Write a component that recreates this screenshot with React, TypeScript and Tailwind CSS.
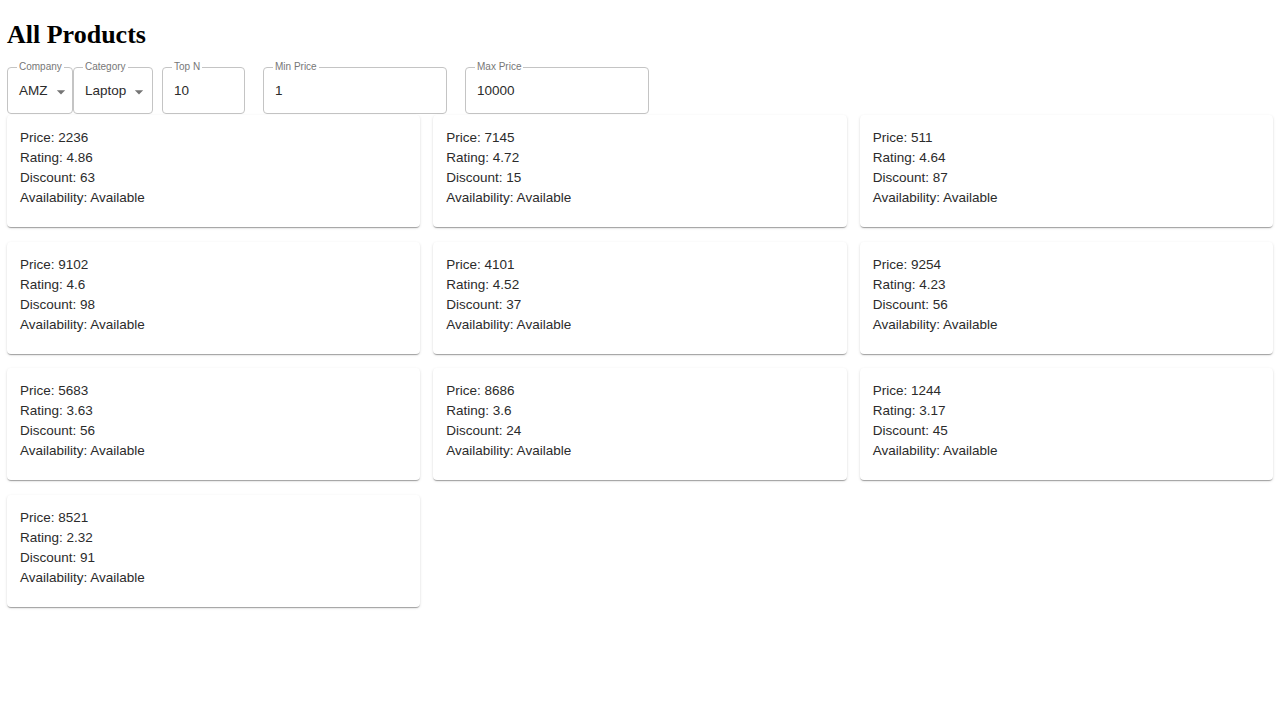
import React from "react";

type P = { price: number; rating: number; discount: number };
const products: P[] = [
  { price: 2236, rating: 4.86, discount: 63 },
  { price: 7145, rating: 4.72, discount: 15 },
  { price: 511, rating: 4.64, discount: 87 },
  { price: 9102, rating: 4.6, discount: 98 },
  { price: 4101, rating: 4.52, discount: 37 },
  { price: 9254, rating: 4.23, discount: 56 },
  { price: 5683, rating: 3.63, discount: 56 },
  { price: 8686, rating: 3.6, discount: 24 },
  { price: 1244, rating: 3.17, discount: 45 },
  { price: 8521, rating: 2.32, discount: 91 },
];

function Arrow() {
  return (
    <svg width="20" height="20" viewBox="0 0 24 24" className="shrink-0 text-[#757575]">
      <path d="M7 10l5 5 5-5z" fill="currentColor" />
    </svg>
  );
}

function Field({
  label,
  value,
  width,
  select,
}: {
  label: string;
  value: string;
  width: string;
  select?: boolean;
}) {
  return (
    <fieldset
      className={`${width} h-[52px] border border-[#c4c4c4] rounded-[4px] px-[10px] pb-0 m-0 min-w-0`}
    >
      <legend className="-ml-[1px] px-[2px] text-[10px] leading-[10px] text-[#777]">
        {label}
      </legend>
      <div className="flex items-center h-[39px] text-[13.5px] text-[#2b2b2b]">
        <span className="pl-[1px]">{value}</span>
        {select && (
          <span className="ml-[3px] mt-[1px]">
            <Arrow />
          </span>
        )}
      </div>
    </fieldset>
  );
}

export default function App() {
  return (
    <div
      className="bg-white min-h-[720px] px-[7px] pb-[8px]"
      style={{ fontFamily: '"Liberation Sans", Arial, sans-serif' }}
    >
      <h1
        className="text-[26px] font-bold leading-[30px] pt-[20px] pb-[12px] text-black"
        style={{ fontFamily: '"Liberation Serif", "Times New Roman", serif' }}
      >
        All Products
      </h1>
      <div className="flex items-start">
        <Field label="Company" value="AMZ" width="w-[66px]" select />
        <Field label="Category" value="Laptop" width="w-[80px]" select />
        <div className="w-[9px]" />
        <Field label="Top N" value="10" width="w-[83px]" />
        <div className="w-[18px]" />
        <Field label="Min Price" value="1" width="w-[184px]" />
        <div className="w-[18px]" />
        <Field label="Max Price" value="10000" width="w-[184px]" />
      </div>
      <div className="grid grid-cols-3 gap-x-[13px] gap-y-[14.7px] mt-[1px]">
        {products.map((p, i) => (
          <div
            key={i}
            className="bg-white rounded-[4px] px-[13px] pt-[13px] pb-[19px] text-[13.5px] leading-[20px] text-[#2b2b2b] shadow-[0_2px_1px_-1px_rgba(0,0,0,0.2),0_1px_1px_0_rgba(0,0,0,0.14),0_1px_3px_0_rgba(0,0,0,0.12)]"
          >
            <div>Price: {p.price}</div>
            <div>Rating: {p.rating}</div>
            <div>Discount: {p.discount}</div>
            <div>Availability: Available</div>
          </div>
        ))}
      </div>
    </div>
  );
}
